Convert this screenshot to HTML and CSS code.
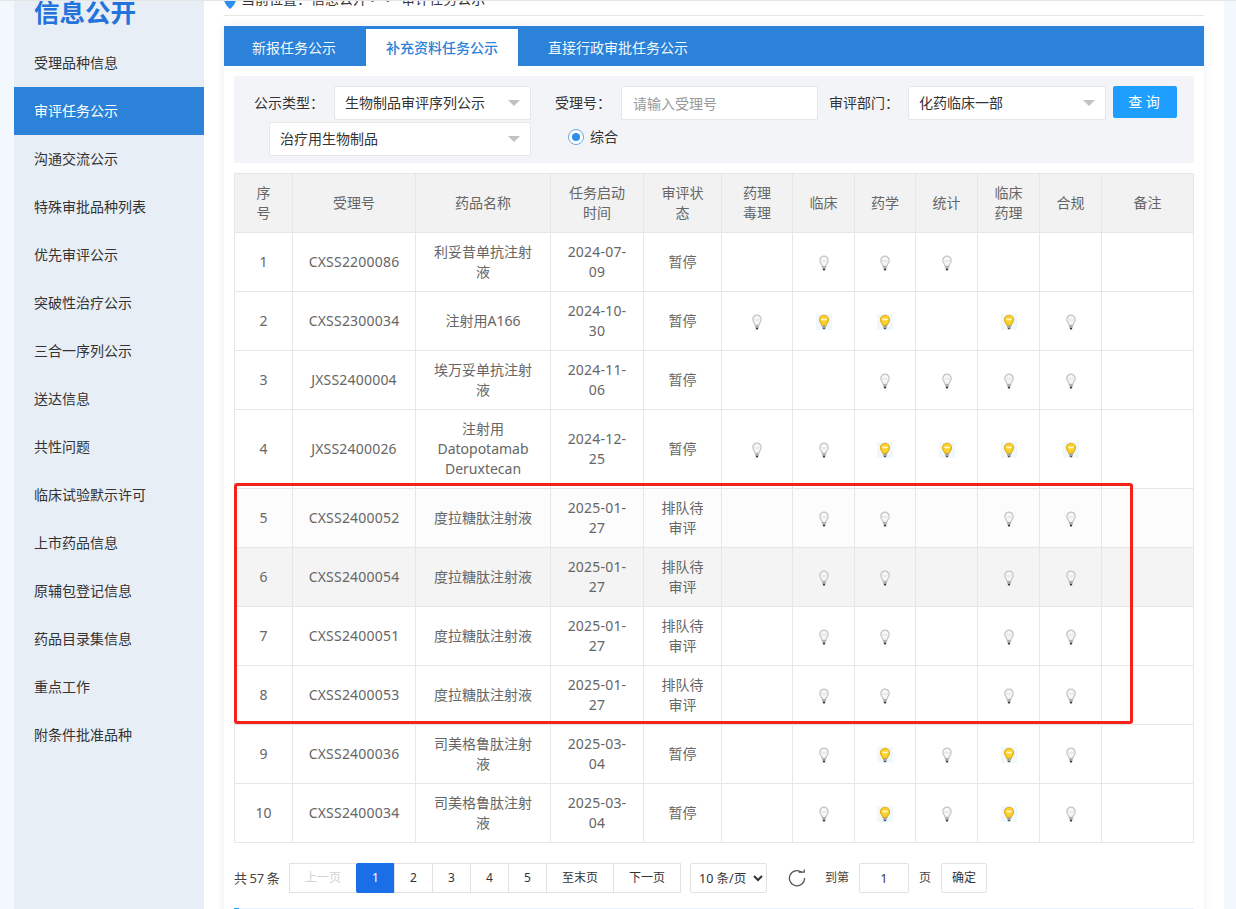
FILE: index.html
```html
<!DOCTYPE html>
<html>
<head>
    <meta charset="UTF-8">
    <meta name="viewport" content="width=device-width, initial-scale=1.0">
    <title>审评任务公示</title>
    <link rel="stylesheet" href="styles.css">
</head>
<body>
    <!-- 灯泡图标 -->
    <svg class="defs" width="0" height="0">
        <symbol id="bulb-off" viewBox="0 0 16 16">
            <path d="M8 1.200a4.200 4.200 0 0 0-4.200 4.300c0 1.800 1.100 2.900 1.800 4.100.3.500.5 1 .6 1.700h3.600c.1-.7.3-1.200.6-1.700.7-1.200 1.800-2.300 1.800-4.100A4.200 4.200 0 0 0 8 1.200z" fill="#f7f7f7" stroke="#c4c4c4" stroke-width="1.200"/>
            <path d="M5.200 5.500c1.500.9 4.100.9 5.600 0" fill="none" stroke="#dedede"/>
            <rect x="6.300" y="11.400" width="3.400" height="2.400" fill="#a8a8a8"/>
            <rect x="6.900" y="13.800" width="2.200" height="1.600" fill="#333"/>
        </symbol>
        <symbol id="bulb-on" viewBox="0 0 16 16">
            <rect width="16" height="16" fill="#f1f8fd"/>
            <path d="M8 1.200a4.600 4.600 0 0 0-4.600 4.600c0 1.800 1.200 2.900 2 4.100.3.500.4 1 .5 1.500h4.200c.1-.5.2-1 .5-1.500.8-1.200 2-2.300 2-4.100A4.600 4.600 0 0 0 8 1.200z" fill="#fbd22e" stroke="#e2ae12" stroke-width="1.100"/>
            <path d="M5.500 5c1.500.8 3.500.8 5 0" fill="none" stroke="#fff8d8" stroke-width="1.600"/>
            <rect x="6.200" y="11.400" width="3.600" height="2.400" fill="#a3a3a3"/>
            <rect x="6.800" y="13.800" width="2.400" height="1.400" fill="#555"/>
        </symbol>
    </svg>

    <div class="page">
        <!-- 左侧菜单 -->
        <aside class="sidebar">
            <h2 class="side-title">信息公开</h2>
            <ul class="side-menu">
                <li>受理品种信息</li>
                <li class="active">审评任务公示</li>
                <li>沟通交流公示</li>
                <li>特殊审批品种列表</li>
                <li>优先审评公示</li>
                <li>突破性治疗公示</li>
                <li>三合一序列公示</li>
                <li>送达信息</li>
                <li>共性问题</li>
                <li>临床试验默示许可</li>
                <li>上市药品信息</li>
                <li>原辅包登记信息</li>
                <li>药品目录集信息</li>
                <li>重点工作</li>
                <li>附条件批准品种</li>
            </ul>
        </aside>

        <main class="main">
            <div class="crumb">
                <svg class="crumb-icon" width="12" height="12" viewBox="0 0 12 12"><path d="M0 3.500 6 0l6 3.500C11 7 8.500 10 6 12 3.500 10 1 7 0 3.500z" fill="#2b8ff0"/></svg>
                <span>当前位置：信息公开 &gt;&nbsp; &gt;&nbsp; 审评任务公示</span>
            </div>

            <section class="panel">
                <div class="tabs">
                    <div class="tab">新报任务公示</div>
                    <div class="tab active">补充资料任务公示</div>
                    <div class="tab">直接行政审批任务公示</div>
                </div>

                <div class="panel-body">
                    <!-- 查询条件 -->
                    <form class="filter">
                        <div class="filter-row">
                            <label class="label label-type">公示类型：</label>
                            <div class="select select-type">生物制品审评序列公示</div>
                            <label class="label label-no">受理号：</label>
                            <input class="input" type="text" placeholder="请输入受理号">
                            <label class="label label-dept">审评部门：</label>
                            <div class="select select-dept">化药临床一部</div>
                            <button class="btn" type="button">查 询</button>
                        </div>
                        <div class="filter-row row-second">
                            <div class="select select-sub">治疗用生物制品</div>
                            <span class="radio"><i></i>综合</span>
                        </div>
                    </form>

                    <div class="table-wrap">
                        <table class="table">
                            <colgroup>
                                <col class="c-no"><col class="c-id"><col class="c-name"><col class="c-time"><col class="c-state">
                                <col class="c-a"><col class="c-b"><col class="c-c"><col class="c-b"><col class="c-b"><col class="c-b"><col>
                            </colgroup>
                            <thead>
                                <tr><th>序号</th><th>受理号</th><th>药品名称</th><th>任务启动时间</th><th>审评状态</th><th>药理毒理</th><th>临床</th><th>药学</th><th>统计</th><th>临床药理</th><th>合规</th><th>备注</th></tr>
                            </thead>
                            <tbody>
                                <tr><td>1</td><td class="code">CXSS2200086</td><td>利妥昔单抗注射液</td><td class="code">2024-07-09</td><td>暂停</td><td></td>
                                    <td><svg class="bulb"><use href="#bulb-off"/></svg></td><td><svg class="bulb"><use href="#bulb-off"/></svg></td><td><svg class="bulb"><use href="#bulb-off"/></svg></td><td></td><td></td><td></td></tr>
                                <tr><td>2</td><td class="code">CXSS2300034</td><td>注射用A166</td><td class="code">2024-10-30</td><td>暂停</td><td><svg class="bulb"><use href="#bulb-off"/></svg></td>
                                    <td><svg class="bulb"><use href="#bulb-on"/></svg></td><td><svg class="bulb"><use href="#bulb-on"/></svg></td><td></td><td><svg class="bulb"><use href="#bulb-on"/></svg></td><td><svg class="bulb"><use href="#bulb-off"/></svg></td><td></td></tr>
                                <tr><td>3</td><td class="code">JXSS2400004</td><td>埃万妥单抗注射液</td><td class="code">2024-11-06</td><td>暂停</td><td></td>
                                    <td></td><td><svg class="bulb"><use href="#bulb-off"/></svg></td><td><svg class="bulb"><use href="#bulb-off"/></svg></td><td><svg class="bulb"><use href="#bulb-off"/></svg></td><td><svg class="bulb"><use href="#bulb-off"/></svg></td><td></td></tr>
                                <tr><td>4</td><td class="code">JXSS2400026</td><td>注射用Datopotamab Deruxtecan</td><td class="code">2024-12-25</td><td>暂停</td><td><svg class="bulb"><use href="#bulb-off"/></svg></td>
                                    <td><svg class="bulb"><use href="#bulb-off"/></svg></td><td><svg class="bulb"><use href="#bulb-on"/></svg></td><td><svg class="bulb"><use href="#bulb-on"/></svg></td><td><svg class="bulb"><use href="#bulb-on"/></svg></td><td><svg class="bulb"><use href="#bulb-on"/></svg></td><td></td></tr>
                                <tr class="even"><td>5</td><td class="code">CXSS2400052</td><td>度拉糖肽注射液</td><td class="code">2025-01-27</td><td>排队待审评</td><td></td>
                                    <td><svg class="bulb"><use href="#bulb-off"/></svg></td><td><svg class="bulb"><use href="#bulb-off"/></svg></td><td></td><td><svg class="bulb"><use href="#bulb-off"/></svg></td><td><svg class="bulb"><use href="#bulb-off"/></svg></td><td></td></tr>
                                <tr class="hover"><td>6</td><td class="code">CXSS2400054</td><td>度拉糖肽注射液</td><td class="code">2025-01-27</td><td>排队待审评</td><td></td>
                                    <td><svg class="bulb"><use href="#bulb-off"/></svg></td><td><svg class="bulb"><use href="#bulb-off"/></svg></td><td></td><td><svg class="bulb"><use href="#bulb-off"/></svg></td><td><svg class="bulb"><use href="#bulb-off"/></svg></td><td></td></tr>
                                <tr><td>7</td><td class="code">CXSS2400051</td><td>度拉糖肽注射液</td><td class="code">2025-01-27</td><td>排队待审评</td><td></td>
                                    <td><svg class="bulb"><use href="#bulb-off"/></svg></td><td><svg class="bulb"><use href="#bulb-off"/></svg></td><td></td><td><svg class="bulb"><use href="#bulb-off"/></svg></td><td><svg class="bulb"><use href="#bulb-off"/></svg></td><td></td></tr>
                                <tr><td>8</td><td class="code">CXSS2400053</td><td>度拉糖肽注射液</td><td class="code">2025-01-27</td><td>排队待审评</td><td></td>
                                    <td><svg class="bulb"><use href="#bulb-off"/></svg></td><td><svg class="bulb"><use href="#bulb-off"/></svg></td><td></td><td><svg class="bulb"><use href="#bulb-off"/></svg></td><td><svg class="bulb"><use href="#bulb-off"/></svg></td><td></td></tr>
                                <tr><td>9</td><td class="code">CXSS2400036</td><td>司美格鲁肽注射液</td><td class="code">2025-03-04</td><td>暂停</td><td></td>
                                    <td><svg class="bulb"><use href="#bulb-off"/></svg></td><td><svg class="bulb"><use href="#bulb-on"/></svg></td><td><svg class="bulb"><use href="#bulb-off"/></svg></td><td><svg class="bulb"><use href="#bulb-on"/></svg></td><td><svg class="bulb"><use href="#bulb-off"/></svg></td><td></td></tr>
                                <tr><td>10</td><td class="code">CXSS2400034</td><td>司美格鲁肽注射液</td><td class="code">2025-03-04</td><td>暂停</td><td></td>
                                    <td><svg class="bulb"><use href="#bulb-off"/></svg></td><td><svg class="bulb"><use href="#bulb-on"/></svg></td><td><svg class="bulb"><use href="#bulb-off"/></svg></td><td><svg class="bulb"><use href="#bulb-on"/></svg></td><td><svg class="bulb"><use href="#bulb-off"/></svg></td><td></td></tr>
                            </tbody>
                        </table>
                        <!-- 截图上的红色标注框 -->
                        <div class="mark-box"></div>
                    </div>

                    <!-- 分页 -->
                    <div class="pager">
                        <span class="count">共 57 条</span>
                        <div class="pages">
                            <a class="wide disabled">上一页</a>
                            <a class="current">1</a>
                            <a>2</a>
                            <a>3</a>
                            <a>4</a>
                            <a>5</a>
                            <a class="wide">至末页</a>
                            <a class="wide">下一页</a>
                        </div>
                        <select class="limit"><option>10 条/页</option></select>
                        <svg class="refresh" width="18" height="18" viewBox="0 0 18 18"><path d="M13.800 3.300A7.600 7.600 0 1 0 16.600 9" fill="none" stroke="#555" stroke-width="1.300"/><path d="M10.600 3.200h5.600V.6" fill="none" stroke="#555" stroke-width="1.300"/></svg>
                        <span class="skip-to">到第</span>
                        <input class="skip-input" type="text" value="1">
                        <span class="skip-unit">页</span>
                        <button class="skip-btn" type="button">确定</button>
                    </div>

                    <div class="progress"></div>
                </div>
            </section>
        </main>
    </div>
</body>
</html>
```

FILE: styles.css
```css
* {
    box-sizing: border-box;
}

html,
body {
    margin: 0;
    height: 100%;
    overflow: hidden;
}

body {
    background-color: #F3F7FE;
    color: #333;
    font-family: "Noto Sans", "Noto Sans CJK SC", "Liberation Sans", sans-serif;
    font-size: 14px;
    line-height: 20px;
}

.defs {
    display: block;
}

.page {
    display: flex;
    height: 909px;
    padding: 0 12px 0 14px;
    border-top: 1px solid #E5E5E5;
    overflow: hidden;
}

/* 左侧菜单 */

.sidebar {
    flex: none;
    width: 190px;
    background-color: #E8EEF6;
}

.side-title {
    height: 38px;
    margin: 0;
    padding-left: 20px;
    color: #2473DA;
    font-size: 25.5px;
    font-weight: 700;
    line-height: 22px;
}

.side-menu {
    margin: 0;
    padding: 0;
    list-style: none;
}

.side-menu li {
    height: 48px;
    padding-left: 20px;
    color: #333;
    line-height: 48px;
}

.side-menu li.active {
    background-color: #2B82D8;
    color: #FFF;
}

/* 主体 */

.main {
    flex: 1;
    min-width: 0;
    padding: 0 20px;
    background-color: #FFF;
}

.crumb {
    display: flex;
    align-items: flex-end;
    gap: 5px;
    height: 15px;
    padding-bottom: 6px;
    border-bottom: 1px solid #E6E6E6;
}

.crumb span {
    flex: none;
}

.crumb-icon {
    flex: none;
}

.panel {
    margin-top: 10px;
    height: 900px;
    background-color: #FFF;
    box-shadow: 0 0 8px rgb(30 80 160 / 0.1);
}

.tabs {
    display: flex;
    align-items: flex-end;
    height: 40px;
    background-color: #2B82D8;
    color: #F2F7FC;
}

.tab {
    height: 37px;
    padding: 0 30px;
    line-height: 37px;
}

.tab:first-child {
    padding-left: 28px;
}

.tab.active {
    padding: 0 20px;
    background-color: #FFF;
    color: #2B82D8;
    font-weight: 500;
}

.panel-body {
    padding: 10px;
}

/* 查询条件 */

.filter {
    height: 87px;
    padding: 10px 0 0;
    background-color: #F3F4F8;
}

.filter-row {
    display: flex;
    align-items: flex-start;
}

.row-second {
    margin-top: 2px;
    padding-left: 35px;
}

.label {
    flex: none;
    color: #333;
    line-height: 34px;
}

.label-type {
    margin-left: 20px;
    width: 80px;
}

.label-no {
    margin-left: 24px;
    width: 66px;
}

.label-dept {
    margin-left: 11px;
    width: 79px;
}

.select,
.input {
    height: 34px;
    border: 1px solid #E6E6E6;
    border-radius: 2px;
    background-color: #FFF;
    color: #333;
    font: inherit;
    line-height: 32px;
}

.select {
    position: relative;
    padding-left: 10px;
}

.select::after {
    content: "";
    position: absolute;
    top: 13px;
    right: 10px;
    border-style: solid;
    border-width: 6px 6px 0;
    border-color: #C2C2C2 transparent transparent;
}

.select-type {
    width: 197px;
}

.select-sub {
    width: 262px;
}

.select-dept {
    width: 198px;
}

.input {
    width: 197px;
    padding-left: 11px;
}

.input::placeholder {
    color: #999;
}

.btn {
    width: 64px;
    height: 32px;
    margin-left: 7px;
    padding: 0 2px 0 0;
    border: 0;
    border-radius: 2px;
    background-color: #1E9FFF;
    color: #FFF;
    font: inherit;
}

.radio {
    display: flex;
    align-items: center;
    gap: 6px;
    height: 30px;
    margin-left: 37px;
    color: #333;
}

.radio i {
    position: relative;
    width: 16px;
    height: 16px;
    border: 1px solid #6AA8EA;
    border-radius: 50%;
    background-color: #FFF;
}

.radio i::after {
    content: "";
    position: absolute;
    top: 3px;
    left: 3px;
    width: 8px;
    height: 8px;
    border-radius: 50%;
    background-color: #2B8FEA;
}

/* 表格 */

.table-wrap {
    position: relative;
    margin-top: 10px;
}

.table {
    width: 960px;
    table-layout: fixed;
    border-collapse: collapse;
    color: #666;
}

.c-no { width: 58px; }
.c-id { width: 123px; }
.c-name { width: 135px; }
.c-time { width: 93px; }
.c-state { width: 78px; }
.c-a { width: 71px; }
.c-b { width: 62px; }
.c-c { width: 61px; }

.table th,
.table td {
    height: 59px;
    padding: 9px 15px;
    border: 1px solid #E6E6E6;
    font-weight: 400;
    text-align: center;
    vertical-align: middle;
}

.table td.code {
    letter-spacing: 0.2px;
}

.table th {
    background-color: #F2F2F2;
}

.table .even td {
    background-color: #FCFCFC;
}

.table .hover td {
    background-color: #F4F4F4;
}

.bulb {
    display: block;
    width: 16px;
    height: 16px;
    margin: 1px auto 0;
}

.mark-box {
    position: absolute;
    top: 310px;
    left: 0;
    width: 899px;
    height: 241px;
    border: 3px solid #F5211B;
    border-radius: 3px;
}

/* 分页 */

.pager {
    display: flex;
    align-items: center;
    height: 30px;
    margin-top: 20px;
}

.count {
    flex: none;
    width: 55px;
    color: #444;
    font-size: 13px;
    word-spacing: -1px;
}

.pages {
    display: flex;
}

.pages a {
    width: 39px;
    height: 30px;
    margin-left: -1px;
    border: 1px solid #E2E2E2;
    color: #333;
    font-size: 12px;
    line-height: 28px;
    text-align: center;
}

.pages a:first-child {
    margin-left: 0;
}

.pages a.wide {
    width: 68px;
}

.pages a.disabled {
    color: #D2D2D2;
}

.pages a.current {
    border-color: #1A6FE8;
    border-radius: 2px;
    background-color: #1A6FE8;
    color: #FFF;
}

.limit {
    width: 77px;
    height: 30px;
    margin-left: 9px;
    padding: 0 0 0 4px;
    border: 1px solid #E2E2E2;
    border-radius: 2px;
    background-color: #FFF;
    color: #333;
    font: inherit;
    font-size: 12.5px;
}

.refresh {
    flex: none;
    margin: 0 19px 0 21px;
}

.skip-to {
    width: 34px;
    color: #444;
    font-size: 12px;
}

.skip-input {
    width: 50px;
    height: 30px;
    border: 1px solid #E2E2E2;
    border-radius: 2px;
    color: #333;
    font: inherit;
    font-size: 12px;
    text-align: center;
}

.skip-unit {
    width: 32px;
    padding-left: 10px;
    color: #444;
    font-size: 12px;
}

.skip-btn {
    width: 46px;
    height: 30px;
    padding: 0;
    border: 1px solid #E2E2E2;
    border-radius: 2px;
    background-color: #FFF;
    color: #333;
    font: inherit;
    font-size: 12px;
}

.progress {
    height: 2px;
    margin-top: 15px;
    background: linear-gradient(to right, #1E9FFF 5px, #E6F2FF 5px);
}
```
